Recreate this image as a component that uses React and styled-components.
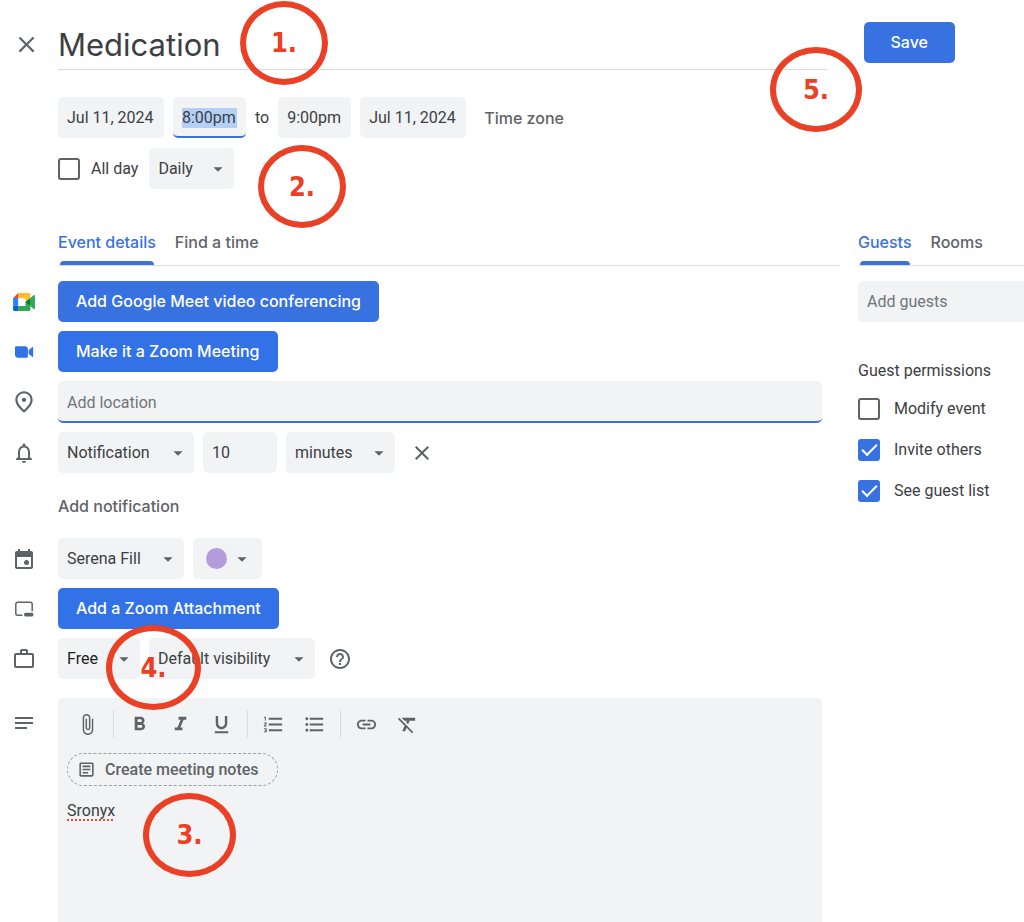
import React from "react";
import styled, { createGlobalStyle, css } from "styled-components";
import {
  MdClose,
  MdArrowDropDown,
  MdOutlinePlace,
  MdNotificationsNone,
  MdWorkOutline,
  MdHelpOutline,
  MdNotes,
  MdAttachFile,
  MdFormatBold,
  MdFormatItalic,
  MdFormatUnderlined,
  MdFormatListNumbered,
  MdFormatListBulleted,
  MdLink,
  MdFormatClear,
  MdOutlineArticle,
} from "react-icons/md";

const color = {
  text: "#3c4043",
  muted: "#5f6368",
  hint: "#70757a",
  field: "#f1f3f4",
  line: "#dadce0",
  blue: "#3871e0",
  zoomBlue: "#3371e7",
  mark: "#ea4025",
};

const brandFont = `Inter, Roboto, sans-serif`;

const GlobalStyle = createGlobalStyle`
  *, *::before, *::after { box-sizing: border-box; }
  body {
    margin: 0;
    background: #fff;
    color: ${color.text};
    font: 400 16px/20px Roboto, sans-serif;
  }
  button, input, select, textarea { font: inherit; color: inherit; margin: 0; }
`;

const Page = styled.div`
  position: relative;
  min-height: 100vh;
  display: flex;
  flex-direction: column;
`;

const Header = styled.header`
  display: grid;
  grid-template-columns: 52px minmax(0, 1fr) auto;
  column-gap: 6px;
  padding: 22px 69px 0 0;
`;

const IconButton = styled.button`
  display: inline-flex;
  align-items: center;
  justify-content: center;
  padding: 0;
  border: 0;
  background: none;
  color: ${color.muted};
  cursor: pointer;
`;

const CloseButton = styled(IconButton)`
  padding-bottom: 3px;
`;

const TitleInput = styled.input`
  width: 100%;
  height: 48px;
  padding: 0 0 2px;
  border: 0;
  border-bottom: 1px solid ${color.line};
  outline: 0;
  background: none;
  font: 400 31px/40px ${brandFont};
`;

const Button = styled.button`
  height: 41px;
  padding: 0 ${(p) => (p.$wide ? 27 : 18)}px 2px;
  border: 0;
  border-radius: 5px;
  background: ${(p) => (p.$zoom ? color.zoomBlue : color.blue)};
  color: #fff;
  font: 500 16px/20px ${brandFont};
  white-space: nowrap;
  cursor: pointer;
`;

const SaveButton = styled(Button)`
  margin-left: 31px;
`;

const Schedule = styled.section`
  display: flex;
  flex-direction: column;
  gap: 10px;
  padding: 27px 0 32px 58px;
`;

const Line = styled.div`
  display: flex;
  align-items: center;
  gap: ${(p) => p.$gap || 9}px;
`;

const focusLine = css`
  border-bottom: 2px solid ${color.blue};
`;

const Chip = styled.label`
  display: flex;
  align-items: center;
  width: ${(p) => p.$width}px;
  height: 41px;
  padding: ${(p) => (p.$active ? 2 : 1)}px 9px 0;
  border-radius: 5px;
  background: ${color.field};
  ${(p) => p.$active && focusLine}
`;

const ChipInput = styled.input`
  width: 100%;
  height: 20px;
  padding: 0;
  border: 0;
  outline: 0;
  background: ${(p) => (p.$selected ? "#b5d0f7" : "none")};
`;

const TextButton = styled.button`
  padding: 0;
  border: 0;
  background: none;
  color: ${color.muted};
  font: 500 16px/20px ${brandFont};
  cursor: pointer;
`;

const ZoneButton = styled(TextButton)`
  margin-left: 9px;
`;

const SelectBox = styled.label`
  display: grid;
  width: ${(p) => p.$width}px;
  height: 41px;
  align-items: center;
  border-radius: 5px;
  background: ${color.field};
  color: ${(p) => (p.$strong ? "#202124" : color.text)};

  select,
  svg {
    grid-area: 1 / 1;
  }
  select {
    width: 100%;
    height: 100%;
    padding: 0 9px;
    appearance: none;
    border: 0;
    outline: 0;
    background: none;
  }
  svg {
    justify-self: end;
    margin-right: 5px;
    color: ${color.muted};
    pointer-events: none;
  }
`;

const ColorButton = styled.button`
  display: flex;
  align-items: center;
  gap: 4px;
  width: 69px;
  height: 41px;
  padding: 0 13px;
  border: 0;
  border-radius: 5px;
  background: ${color.field};
  color: ${color.muted};

  svg {
    flex: none;
  }
`;

const Swatch = styled.span`
  flex: none;
  width: 21px;
  height: 21px;
  border-radius: 50%;
  background: #b39ddb;
`;

const CheckLabel = styled.label`
  display: flex;
  align-items: center;
  gap: ${(p) => p.$gap}px;
  height: 41px;
  white-space: nowrap;
`;

const Checkbox = styled.input.attrs({ type: "checkbox" })`
  flex: none;
  display: grid;
  place-items: center;
  width: 22px;
  height: 22px;
  appearance: none;
  border: 2px solid ${color.muted};
  border-radius: 3px;

  &:checked {
    border-color: ${color.blue};
    background: ${color.blue};
  }
  &:checked::before {
    content: "";
    width: 15px;
    height: 8px;
    border: solid #fff;
    border-width: 0 0 2px 2px;
    transform: translateY(-2px) rotate(-45deg);
  }
`;

const Columns = styled.main`
  flex: 1;
  display: grid;
  grid-template-columns: minmax(0, 1fr) 166px;
  column-gap: 18px;
`;

const Details = styled.section`
  display: flex;
  flex-direction: column;
`;

const Tabs = styled.div`
  display: flex;
  gap: 19px;
  height: 45px;
  margin-left: ${(p) => (p.$indent ? 58 : 0)}px;
  border-bottom: 1px solid ${color.line};
`;

const Tab = styled.button`
  display: flex;
  flex-direction: column;
  padding: 11px 0 0;
  border: 0;
  background: none;
  color: ${(p) => (p.$active ? color.blue : color.muted)};
  font: 500 16px/20px ${brandFont};
  white-space: nowrap;
  cursor: pointer;

  &::after {
    content: "";
    align-self: stretch;
    height: 4px;
    margin: 9px 2px 0;
    border-radius: 4px 4px 0 0;
    background: ${(p) => (p.$active ? color.blue : "none")};
  }
`;

const Rows = styled.div`
  flex: 1;
  display: flex;
  flex-direction: column;
  gap: 9px;
  padding: 15px 18px 0 0;
`;

const Row = styled.div`
  display: grid;
  grid-template-columns: 48px minmax(0, 1fr);
  column-gap: 10px;
  align-items: center;
`;

const RowIcon = styled.span`
  display: flex;
  align-items: center;
  justify-content: center;
  color: ${color.muted};
`;

const LocationInput = styled.input`
  width: 100%;
  height: 42px;
  padding: 2px 9px 0;
  border: 0;
  border-radius: 5px;
  outline: 0;
  background: ${color.field};
  ${focusLine}
  &::placeholder {
    color: ${color.hint};
    opacity: 1;
  }
`;

const RemoveButton = styled(IconButton)`
  margin-left: 6px;
`;

const AddNotification = styled.div`
  display: flex;
  align-items: center;
  height: 47px;
  padding-left: 58px;
`;

const HelpButton = styled(IconButton)`
  margin-left: 4px;
`;

const EditorRow = styled(Row)`
  flex: 1;
  align-items: stretch;
  margin-top: 10px;
`;

const EditorIcon = styled(RowIcon)`
  align-items: flex-start;
  padding-top: 13px;
`;

const Editor = styled.div`
  display: flex;
  flex-direction: column;
  align-items: flex-start;
  padding: 12px 9px 0;
  border-radius: 5px 5px 0 0;
  background: ${color.field};
`;

const Toolbar = styled.div`
  display: flex;
  align-items: center;
  height: 28px;
`;

const ToolButton = styled(IconButton)`
  width: 41px;
  height: 28px;
`;

const Divider = styled.span`
  width: 1px;
  height: 28px;
  margin: 0 5px;
  background: ${color.line};
`;

const NotesButton = styled.button`
  display: flex;
  align-items: center;
  gap: 9px;
  height: 33px;
  margin-top: 15px;
  padding: 0 18px 0 9px;
  border: 1px dashed #9aa0a6;
  border-radius: 17px;
  background: none;
  color: ${color.muted};
  font-weight: 500;
`;

const Description = styled.textarea`
  flex: 1;
  width: 100%;
  min-height: 100px;
  margin-top: 15px;
  padding: 0;
  border: 0;
  outline: 0;
  resize: none;
  background: none;
  text-decoration: underline dotted #e8453c 2px;
  text-underline-offset: 3px;
  text-decoration-skip-ink: none;
`;

const GuestInput = styled.input`
  width: 100%;
  height: 41px;
  margin-top: 15px;
  padding: 0 9px;
  border: 0;
  border-radius: 5px 0 0 5px;
  outline: 0;
  background: ${color.field};
  &::placeholder {
    color: ${color.hint};
    opacity: 1;
  }
`;

const Permissions = styled.fieldset`
  margin: 39px 0 0;
  padding: 0;
  border: 0;
  legend {
    padding: 0 0 7px;
  }
`;

const Marker = styled.div`
  position: absolute;
  left: ${(p) => p.$x}px;
  top: ${(p) => p.$y}px;
  display: flex;
  align-items: center;
  justify-content: center;
  width: ${(p) => p.$w}px;
  height: ${(p) => p.$h}px;
  border: 6px solid ${color.mark};
  border-radius: 50%;
  color: ${color.mark};
  font: 700 27px/32px "DejaVu Sans Condensed", "DejaVu Sans", sans-serif;
  pointer-events: none;
`;

const MeetLogo = () => (
  <svg width="22" height="18" viewBox="0 0 87.5 72" aria-hidden="true">
    <path fill="#00832d" d="M49.5 36l8.53 9.75 11.47 7.33 2-17.02-2-16.64-11.69 6.44z" />
    <path fill="#0066da" d="M0 51.5V66c0 3.315 2.685 6 6 6h14.5l3-10.96-3-9.54-9.95-3z" />
    <path fill="#e94235" d="M20.5 0L0 20.5l10.55 3 9.95-3 2.95-9.41z" />
    <path fill="#2684fc" d="M20.5 20.5H0v31h20.5z" />
    <path
      fill="#34a853"
      d="M82.6 8.68L69.5 19.42v33.66l13.16 10.79c1.97 1.54 4.85.135 4.85-2.37V11c0-2.535-2.945-3.925-4.91-2.32zM49.5 36v15.5h-29V72h43c3.315 0 6-2.685 6-6V53.08z"
    />
    <path fill="#fbbc2e" d="M63.5 0h-43v20.5h29V36l20-16.57V6c0-3.315-2.685-6-6-6z" />
  </svg>
);

const ZoomLogo = () => (
  <svg width="20" height="12" viewBox="0 0 20 12" fill={color.zoomBlue} aria-hidden="true">
    <path d="M1 1.6C1 .8 1.5.3 2.300.3H11c1.700 0 2.900 1.200 2.900 2.900v7.200c0 .8-.5 1.300-1.300 1.300H4C2.300 11.700 1 10.500 1 8.800z" />
    <path d="M14.600 4.300l3.500-3.100c.5-.4 1.100-.2 1.100.5v8.600c0 .7-.6.9-1.100.5l-3.500-3.100z" />
  </svg>
);

const CalendarIcon = () => (
  <svg width="24" height="24" viewBox="0 0 24 24" fill="currentColor" aria-hidden="true">
    <path d="M19 4h-1V2h-2v2H8V2H6v2H5c-1.110 0-2 .9-2 2v14c0 1.100.89 2 2 2h14c1.100 0 2-.9 2-2V6c0-1.100-.9-2-2-2zm0 16H5V10h14v10z" />
    <circle cx="14.500" cy="15.500" r="2.500" />
  </svg>
);

const AttachmentIcon = () => (
  <svg width="24" height="24" viewBox="0 0 24 24" fill="none" stroke="currentColor" aria-hidden="true">
    <path d="M10.500 18.200H5.800a2 2 0 0 1-2-2V7.300a2 2 0 0 1 2-2h12.400a2 2 0 0 1 2 2v7" strokeWidth="1.500" />
    <rect x="12" y="15.800" width="9.500" height="3.600" rx="1.600" fill="currentColor" stroke="none" />
  </svg>
);

function Select({ label, value, width, strong }) {
  return (
    <SelectBox $width={width} $strong={strong}>
      <select aria-label={label} defaultValue={value}>
        <option>{value}</option>
      </select>
      <MdArrowDropDown size={22} />
    </SelectBox>
  );
}

function DateChip({ label, value, width, active }) {
  return (
    <Chip $width={width} $active={active}>
      <ChipInput aria-label={label} defaultValue={value} $selected={active} />
    </Chip>
  );
}

const toolGroups = [
  [["Attach file", MdAttachFile]],
  [
    ["Bold", MdFormatBold],
    ["Italic", MdFormatItalic],
    ["Underline", MdFormatUnderlined],
  ],
  [
    ["Numbered list", MdFormatListNumbered],
    ["Bulleted list", MdFormatListBulleted],
  ],
  [
    ["Insert link", MdLink],
    ["Remove formatting", MdFormatClear],
  ],
];

const permissions = [
  { label: "Modify event", checked: false },
  { label: "Invite others", checked: true },
  { label: "See guest list", checked: true },
];

const markers = [
  { n: 1, x: 240, y: 1, w: 88, h: 84 },
  { n: 2, x: 258, y: 145, w: 88, h: 83 },
  { n: 3, x: 143, y: 793, w: 93, h: 84 },
  { n: 4, x: 106, y: 625, w: 95, h: 85 },
  { n: 5, x: 770, y: 47, w: 92, h: 85 },
];

export default function App() {
  return (
    <>
      <GlobalStyle />
      <Page>
        <Header>
          <CloseButton aria-label="Close">
            <MdClose size={27} />
          </CloseButton>
          <TitleInput aria-label="Title" defaultValue="Medication" />
          <SaveButton $wide>Save</SaveButton>
        </Header>

        <Schedule>
          <Line>
            <DateChip label="Start date" value="Jul 11, 2024" width={106} />
            <DateChip label="Start time" value="8:00pm" width={73} active />
            <span>to</span>
            <DateChip label="End time" value="9:00pm" width={73} />
            <DateChip label="End date" value="Jul 11, 2024" width={106} />
            <ZoneButton>Time zone</ZoneButton>
          </Line>
          <Line $gap={11}>
            <CheckLabel $gap={11}>
              <Checkbox />
              All day
            </CheckLabel>
            <Select label="Repeat" value="Daily" width={85} />
          </Line>
        </Schedule>

        <Columns>
          <Details>
            <Tabs role="tablist" $indent>
              <Tab role="tab" aria-selected="true" $active>Event details</Tab>
              <Tab role="tab" aria-selected="false">Find a time</Tab>
            </Tabs>
            <Rows>
              <Row>
                <RowIcon><MeetLogo /></RowIcon>
                <Line><Button>Add Google Meet video conferencing</Button></Line>
              </Row>
              <Row>
                <RowIcon><ZoomLogo /></RowIcon>
                <Line><Button $zoom>Make it a Zoom Meeting</Button></Line>
              </Row>
              <Row>
                <RowIcon><MdOutlinePlace size={26} /></RowIcon>
                <LocationInput aria-label="Location" placeholder="Add location" />
              </Row>
              <Row>
                <RowIcon><MdNotificationsNone size={24} /></RowIcon>
                <Line>
                  <Select label="Notification type" value="Notification" width={136} />
                  <DateChip label="Notification time" value="10" width={74} />
                  <Select label="Notification unit" value="minutes" width={109} />
                  <RemoveButton aria-label="Remove notification"><MdClose size={24} /></RemoveButton>
                </Line>
              </Row>
              <AddNotification>
                <TextButton>Add notification</TextButton>
              </AddNotification>
              <Row>
                <RowIcon><CalendarIcon /></RowIcon>
                <Line>
                  <Select label="Calendar" value="Serena Fill" width={126} />
                  <ColorButton aria-label="Event color">
                    <Swatch />
                    <MdArrowDropDown size={22} />
                  </ColorButton>
                </Line>
              </Row>
              <Row>
                <RowIcon><AttachmentIcon /></RowIcon>
                <Line><Button $zoom>Add a Zoom Attachment</Button></Line>
              </Row>
              <Row>
                <RowIcon><MdWorkOutline size={24} /></RowIcon>
                <Line>
                  <Select label="Availability" value="Free" width={82} strong />
                  <Select label="Visibility" value="Default visibility" width={166} />
                  <HelpButton aria-label="Help"><MdHelpOutline size={24} /></HelpButton>
                </Line>
              </Row>
              <EditorRow>
                <EditorIcon><MdNotes size={24} /></EditorIcon>
                <Editor>
                  <Toolbar role="toolbar" aria-label="Formatting">
                    {toolGroups.map((group, i) => (
                      <React.Fragment key={i}>
                        {i > 0 && <Divider />}
                        {group.map(([label, Icon]) => (
                          <ToolButton key={label} aria-label={label}>
                            <Icon size={23} />
                          </ToolButton>
                        ))}
                      </React.Fragment>
                    ))}
                  </Toolbar>
                  <NotesButton>
                    <MdOutlineArticle size={19} />
                    Create meeting notes
                  </NotesButton>
                  <Description aria-label="Description" defaultValue="Sronyx" spellCheck={false} />
                </Editor>
              </EditorRow>
            </Rows>
          </Details>

          <aside>
            <Tabs role="tablist">
              <Tab role="tab" aria-selected="true" $active>Guests</Tab>
              <Tab role="tab" aria-selected="false">Rooms</Tab>
            </Tabs>
            <GuestInput aria-label="Add guests" placeholder="Add guests" />
            <Permissions>
              <legend>Guest permissions</legend>
              {permissions.map((p) => (
                <CheckLabel key={p.label} $gap={14}>
                  <Checkbox defaultChecked={p.checked} />
                  {p.label}
                </CheckLabel>
              ))}
            </Permissions>
          </aside>
        </Columns>

        {markers.map((m) => (
          <Marker key={m.n} $x={m.x} $y={m.y} $w={m.w} $h={m.h}>
            {m.n}.
          </Marker>
        ))}
      </Page>
    </>
  );
}
